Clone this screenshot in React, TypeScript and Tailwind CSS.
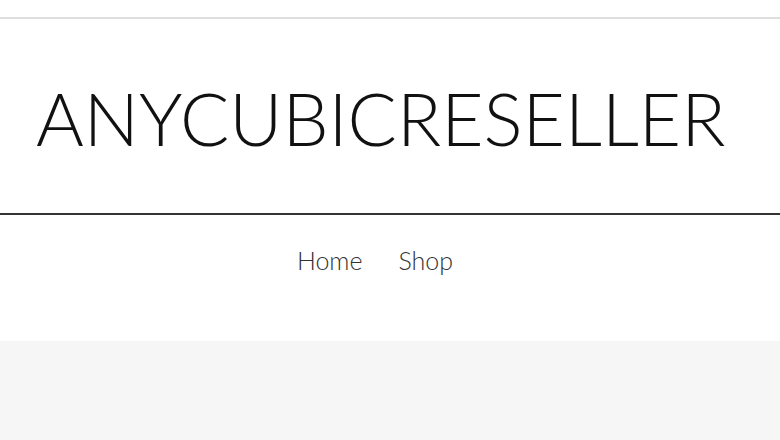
import React from "react";

export default function App() {
  return (
    <div className="w-[780px] h-[440px] bg-white overflow-hidden flex flex-col" style={{ fontFamily: "Lato, 'Open Sans', sans-serif" }}>
      <div className="h-[17px] shrink-0 bg-white" />
      <div className="h-[2px] shrink-0 bg-[#dedede]" />
      <header className="h-[194px] shrink-0 flex items-center pl-[36px]">
        <h1 className="text-[73px] leading-none font-light text-[#111] tracking-normal mt-[4px]">ANYCUBICRESELLER</h1>
      </header>
      <div className="h-[2px] shrink-0 bg-[#333]" />
      <nav className="h-[126px] shrink-0 flex justify-center items-start pt-[27px] gap-[36px] text-[25px] font-light text-[#333] pr-[30px]">
        <span>Home</span>
        <span>Shop</span>
      </nav>
      <div className="flex-1 bg-[#f6f6f6]" />
    </div>
  );
}
